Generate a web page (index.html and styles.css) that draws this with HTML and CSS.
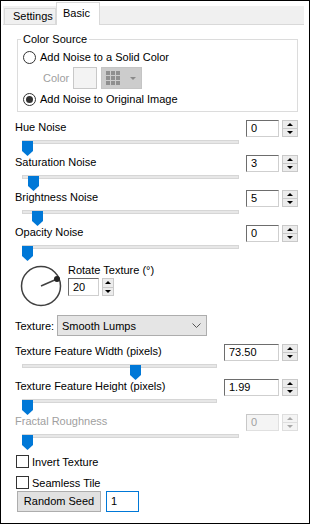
FILE: index.html
```
<!DOCTYPE html>
<html>
<head>
<meta charset="utf-8">
<link rel="stylesheet" href="styles.css">
</head>
<body>
<div class="win">
  <div class="tabbar">
    <div class="tab">Settings</div>
    <div class="tab sel">Basic</div>
  </div>
  <div class="page">
    <fieldset class="grp">
      <legend>Color Source</legend>
      <div class="rrow"><span class="radio"></span><span>Add Noise to a Solid Color</span></div>
      <div class="crow">
        <span class="clabel dis">Color</span>
        <span class="swatch"></span>
        <span class="gridbtn">
          <svg width="14" height="14" viewBox="0 0 14 14"><g fill="#8f8f8f"><rect x="0" y="0" width="4" height="4"/><rect x="5" y="0" width="4" height="4"/><rect x="10" y="0" width="4" height="4"/><rect x="0" y="5" width="4" height="4"/><rect x="5" y="5" width="4" height="4"/><rect x="10" y="5" width="4" height="4"/><rect x="0" y="10" width="4" height="4"/><rect x="5" y="10" width="4" height="4"/><rect x="10" y="10" width="4" height="4"/></g></svg>
          <span class="arr"></span>
        </span>
      </div>
      <div class="rrow"><span class="radio on"></span><span>Add Noise to Original Image</span></div>
    </fieldset>

    <div class="blk first">
      <div class="l"><div class="lbl">Hue Noise</div><div class="sl"><div class="trk"></div><div class="th" style="left:0px"></div></div></div>
      <div class="spin"><div class="v">0</div><div class="b"><i class="up"></i><i class="dn"></i></div></div>
    </div>
    <div class="blk">
      <div class="l"><div class="lbl">Saturation Noise</div><div class="sl"><div class="trk"></div><div class="th" style="left:6px"></div></div></div>
      <div class="spin"><div class="v">3</div><div class="b"><i class="up"></i><i class="dn"></i></div></div>
    </div>
    <div class="blk">
      <div class="l"><div class="lbl">Brightness Noise</div><div class="sl"><div class="trk"></div><div class="th" style="left:10px"></div></div></div>
      <div class="spin"><div class="v">5</div><div class="b"><i class="up"></i><i class="dn"></i></div></div>
    </div>
    <div class="blk">
      <div class="l"><div class="lbl">Opacity Noise</div><div class="sl"><div class="trk"></div><div class="th" style="left:0px"></div></div></div>
      <div class="spin"><div class="v">0</div><div class="b"><i class="up"></i><i class="dn"></i></div></div>
    </div>

    <div class="rot">
      <svg class="dial" width="44" height="44" viewBox="0 0 44 44">
        <circle cx="22" cy="22" r="19.5" fill="none" stroke="#404040" stroke-width="1.5"/>
        <line x1="22" y1="22" x2="38" y2="15" stroke="#404040" stroke-width="1.5"/>
        <circle cx="38" cy="15" r="3" fill="#222"/>
      </svg>
      <div class="rotc">
        <div class="lbl">Rotate Texture (°)</div>
        <div class="spin sm"><div class="v">20</div><div class="b"><i class="up"></i><i class="dn"></i></div></div>
      </div>
    </div>

    <div class="tex">
      <span class="tlabel">Texture:</span>
      <div class="combo"><span>Smooth Lumps</span>
        <svg width="9" height="5" viewBox="0 0 9 5"><path d="M0.5 0.5 L4.5 4.5 L8.5 0.5" fill="none" stroke="#555" stroke-width="1"/></svg>
      </div>
    </div>

    <div class="blk wide first2">
      <div class="l"><div class="lbl">Texture Feature Width (pixels)</div><div class="sl"><div class="trk"></div><div class="th" style="left:108px"></div></div></div>
      <div class="spin"><div class="v">73.50</div><div class="b"><i class="up"></i><i class="dn"></i></div></div>
    </div>
    <div class="blk wide">
      <div class="l"><div class="lbl">Texture Feature Height (pixels)</div><div class="sl"><div class="trk"></div><div class="th" style="left:0px"></div></div></div>
      <div class="spin"><div class="v">1.99</div><div class="b"><i class="up"></i><i class="dn"></i></div></div>
    </div>
    <div class="blk">
      <div class="l"><div class="lbl dis">Fractal Roughness</div><div class="sl"><div class="trk"></div><div class="th" style="left:0px"></div></div></div>
      <div class="spin off"><div class="v">0</div><div class="b"><i class="up"></i><i class="dn"></i></div></div>
    </div>

    <div class="chk c1"><span class="box"></span><span>Invert Texture</span></div>
    <div class="chk c2"><span class="box"></span><span>Seamless Tile</span></div>
    <div class="seed">
      <div class="btn">Random Seed</div>
      <div class="seedval">1</div>
    </div>
  </div>
</div>
</body>
</html>
```
FILE: styles.css
```
html, body {
  margin: 0;
  padding: 0;
  background: #fff;
}
body {
  font-family: "Liberation Sans", Arial, sans-serif;
  font-size: 11px;
  color: #000;
}
.win {
  width: 310px;
  height: 524px;
  box-sizing: border-box;
  border: 1px solid #000;
  background: #fff;
  overflow: hidden;
}
.tabbar {
  height: 19px;
  box-sizing: border-box;
  margin: 5px 5px 0 2px;
  padding-left: 1px;
  background: #f0f0f0;
  border-bottom: 1px solid #d9d9d9;
  display: flex;
  align-items: flex-end;
}
.tab {
  height: 16px;
  box-sizing: border-box;
  width: 52px;
  border: 1px solid #d9d9d9;
  border-bottom: 0;
  background: #f0f0f0;
  line-height: 15px;
  padding-left: 8px;
}
.tab.sel {
  height: 23px;
  width: 44px;
  margin-bottom: -1px;
  background: #fff;
  padding-left: 6px;
  line-height: 22px;
  padding-bottom: 2px;
  line-height: 20px;
}
.page {
  padding: 0 11px 0 14px;
}
.grp {
  margin: 8px 0 0 2px;
  padding: 4px 0 5px 5px;
  border: 1px solid #dcdcdc;
  min-width: 0;
}
.grp legend {
  padding: 0 2px;
  margin-left: -2px;
  line-height: 13px;
}
.rrow {
  display: flex;
  align-items: center;
  height: 14px;
  gap: 4px;
  white-space: nowrap;
}
.radio {
  width: 13px;
  height: 13px;
  box-sizing: border-box;
  border: 1px solid #333;
  border-radius: 50%;
  background: #fff;
  display: flex;
  align-items: center;
  justify-content: center;
  flex: none;
}
.radio.on::after {
  content: "";
  width: 7px;
  height: 7px;
  border-radius: 50%;
  background: #333;
}
.crow {
  display: flex;
  align-items: center;
  height: 22px;
  margin: 3px 0;
  padding-left: 20px;
}
.clabel {
  width: 30px;
}
.dis {
  color: #a0a0a0;
}
.swatch {
  width: 24px;
  height: 22px;
  box-sizing: border-box;
  border: 1px solid #c8c8c8;
  background: #f3f3f3;
  margin-right: 4px;
}
.gridbtn {
  width: 41px;
  height: 22px;
  box-sizing: border-box;
  background: #cccccc;
  border: 1px solid #c4c4c4;
  display: flex;
  align-items: center;
  padding-left: 4px;
  gap: 10px;
}
.gridbtn .arr {
  width: 0;
  height: 0;
  border-left: 3px solid transparent;
  border-right: 3px solid transparent;
  border-top: 3px solid #8a8a8a;
}
.blk {
  display: flex;
  height: 35px;
}
.blk.first {
  margin-top: 8px;
}
.blk.first2 {
  margin-top: 8px;
}
.blk .l {
  flex: 1;
  min-width: 0;
}
.lbl {
  height: 14px;
  line-height: 14px;
  white-space: nowrap;
}
.sl {
  position: relative;
  height: 21px;
  margin: 0 7px;
}
.trk {
  margin-top: 6px;
  height: 4px;
  box-sizing: border-box;
  background: #e7e7e7;
  border: 1px solid #d6d6d6;
}
.th {
  position: absolute;
  top: 1px;
  width: 11px;
  height: 15px;
  background: #0078d7;
  clip-path: polygon(0 0, 100% 0, 100% 10px, 50% 100%, 0 10px);
}
.spin {
  width: 52px;
  height: 17px;
  display: flex;
  flex: none;
  box-sizing: border-box;
}
.blk.wide .spin {
  width: 74px;
}
.spin .v {
  flex: 1;
  box-sizing: border-box;
  border: 1px solid;
  border-color: #6d6d6d #cfcfcf #cfcfcf #6d6d6d;
  padding-left: 4px;
  line-height: 15px;
  background: #fff;
}
.spin .b {
  width: 16px;
  margin-left: 3px;
  display: flex;
  flex-direction: column;
}
.spin .b i {
  flex: 1;
  background: #ececec;
  border: 1px solid #c9c9c9;
  display: flex;
  align-items: center;
  justify-content: center;
}
.spin .b i.dn {
  border-top: 0;
}
.spin .b i.up::after {
  content: "";
  border-left: 3px solid transparent;
  border-right: 3px solid transparent;
  border-bottom: 3px solid #000;
}
.spin .b i.dn::after {
  content: "";
  border-left: 3px solid transparent;
  border-right: 3px solid transparent;
  border-top: 3px solid #000;
}
.spin.off .v {
  color: #a0a0a0;
  background: #f4f4f4;
  border-color: #c8c8c8 #e0e0e0 #e0e0e0 #c8c8c8;
}
.spin.off .b i {
  background: #f4f4f4;
  border-color: #dedede;
}
.spin.off .b i.up::after {
  border-bottom-color: #a8a8a8;
}
.spin.off .b i.dn::after {
  border-top-color: #a8a8a8;
}
.rot {
  display: flex;
  height: 52px;
}
.dial {
  margin: 4px 0 0 4px;
  flex: none;
}
.rotc {
  margin-left: 5px;
}
.rotc .lbl {
  margin-top: 3px;
}
.spin.sm {
  margin-top: 1px;
  width: 46px;
  height: 18px;
}
.spin.sm .v {
  line-height: 16px;
}
.spin.sm .b {
  width: 12px;
}
.tex {
  display: flex;
  align-items: center;
  height: 21px;
  margin-top: 3px;
}
.tlabel {
  width: 42px;
}
.combo {
  width: 150px;
  height: 21px;
  box-sizing: border-box;
  border: 1px solid #adadad;
  background: #e5e5e5;
  display: flex;
  align-items: center;
  justify-content: space-between;
  padding: 0 5px 0 4px;
}
.chk {
  display: flex;
  align-items: center;
  height: 13px;
  margin-left: 1px;
  gap: 3px;
}
.chk.c1 {
  margin-top: 6px;
}
.chk.c2 {
  margin-top: 8px;
}
.box {
  width: 13px;
  height: 13px;
  box-sizing: border-box;
  border: 1px solid #333;
  background: #fff;
}
.seed {
  display: flex;
  height: 21px;
  margin: 2px 0 0 2px;
}
.btn {
  width: 84px;
  box-sizing: border-box;
  border: 1px solid #adadad;
  background: #e1e1e1;
  text-align: center;
  line-height: 19px;
}
.seedval {
  width: 33px;
  margin-left: 5px;
  box-sizing: border-box;
  border: 1px solid #0078d7;
  padding-left: 4px;
  line-height: 19px;
}
```
